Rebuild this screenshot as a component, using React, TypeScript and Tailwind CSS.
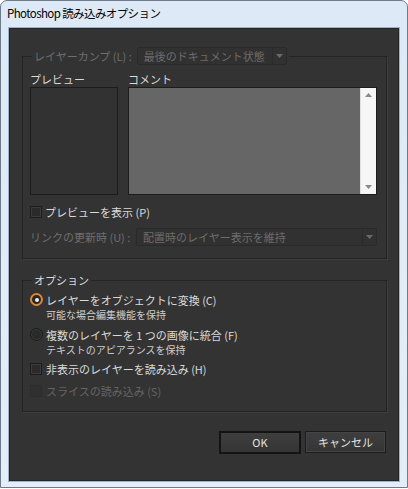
const font = "font-['Noto_Sans_CJK_JP','Noto_Sans',sans-serif]";

function Checkbox({ disabled }: { disabled?: boolean }) {
  return (
    <span
      className={`inline-block w-[12px] h-[12px] shrink-0 border ${
        disabled ? "border-[#2c2c2c] bg-[#303030]" : "border-[#1c1c1c] bg-[#2a2a2a] shadow-[inset_0_0_0_1px_#3c3c3c]"
      }`}
    />
  );
}

function Radio({ checked }: { checked?: boolean }) {
  return checked ? (
    <span className="flex items-center justify-center w-[13px] h-[13px] shrink-0 rounded-full border-2 border-[#e0862f] bg-[#262626]">
      <span className="w-[4px] h-[4px] rounded-full bg-[#f0f0f0]" />
    </span>
  ) : (
    <span className="w-[13px] h-[13px] shrink-0 rounded-full border border-[#1c1c1c] bg-[#2a2a2a] shadow-[inset_0_0_0_1px_#3a3a3a]" />
  );
}

function Select({ label, width }: { label: string; width: string }) {
  return (
    <div className={`flex items-stretch h-[18px] ${width} border border-[#2a2a2a] bg-[#313131] rounded-[2px]`}>
      <span className="flex-1 pl-[6px] text-[11px] leading-[16px] text-[#6c6c6c] truncate">{label}</span>
      <span className="flex items-center justify-center w-[14px] border-l border-[#2a2a2a]">
        <svg width="7" height="4" viewBox="0 0 7 4">
          <path d="M0 0h7L3.5 4z" fill="#6a6a6a" />
        </svg>
      </span>
    </div>
  );
}

export default function App() {
  return (
    <div className={`w-[408px] h-[489px] bg-white ${font}`}>
      <div className="w-[408px] h-[488px] rounded-t-[7px] border border-[#6f7b88] bg-gradient-to-b from-[#dde9f6] to-[#e4eef8] flex flex-col">
        {/* title bar */}
        <div className="h-[26px] pl-[6px] flex items-center text-[11.5px] text-black tracking-[-0.6px]">
          Photoshop 読み込みオプション
        </div>

        {/* client area */}
        <div className="mx-[7px] h-[455px] border border-[#9fb3c8] bg-[#333333] flex flex-col">
          <div className="flex-1 border border-[#262626] flex flex-col">
            {/* group 1 */}
            <fieldset className="mt-[18px] ml-[12px] mr-[11px] border border-[#242424] shadow-[1px_1px_0_#3d3d3d] px-[7px] pb-[12px]">
              <legend className="ml-[2px] px-[2px] flex items-center gap-[5px]">
                <span className="text-[11px] leading-[16px] text-[#6e6e6e]">レイヤーカンプ (L) :</span>
                <Select label="最後のドキュメント状態" width="w-[150px]" />
              </legend>

              <div className="flex gap-[10px] mt-[7px]">
                <div className="flex flex-col">
                  <span className="text-[11px] leading-[15px] text-[#dadada]">プレビュー</span>
                  <div className="w-[88px] h-[108px] border border-[#1c1c1c] bg-[#323232]" />
                </div>
                <div className="flex flex-col">
                  <span className="text-[11px] leading-[15px] text-[#dadada]">コメント</span>
                  <div className="w-[249px] h-[108px] border border-[#1c1c1c] bg-[#666666] flex justify-end">
                    <div className="w-[16px] h-full bg-[#f6f6f6] border-l border-[#e0e0e0] flex flex-col justify-between items-center py-[5px]">
                      <svg width="7" height="4" viewBox="0 0 7 4">
                        <path d="M3.5 0L7 4H0z" fill="#8a8a8a" />
                      </svg>
                      <svg width="7" height="4" viewBox="0 0 7 4">
                        <path d="M0 0h7L3.5 4z" fill="#8a8a8a" />
                      </svg>
                    </div>
                  </div>
                </div>
              </div>

              <div className="flex items-center gap-[3px] mt-[10px] h-[14px]">
                <Checkbox />
                <span className="text-[11px] leading-[14px] text-[#dadada]">プレビューを表示 (P)</span>
              </div>

              <div className="flex items-center mt-[9px]">
                <span className="w-[106px] text-[11px] leading-[16px] text-[#6e6e6e]">リンクの更新時 (U) :</span>
                <Select label="配置時のレイヤー表示を維持" width="w-[241px]" />
              </div>
            </fieldset>

            {/* group 2 */}
            <fieldset className="mt-[13px] ml-[12px] mr-[11px] border border-[#242424] shadow-[1px_1px_0_#3d3d3d] px-[7px] pb-[13px]">
              <legend className="ml-[2px] px-[2px] text-[11px] leading-[16px] text-[#dadada]">オプション</legend>

              <div className="flex flex-col mt-[5px]">
                <div className="flex items-start gap-[3px]">
                  <Radio checked />
                  <div className="flex flex-col">
                    <span className="text-[11px] leading-[14px] text-[#dadada]">レイヤーをオブジェクトに変換 (C)</span>
                    <span className="mt-[1px] text-[10px] leading-[14px] text-[#cdcdcd]">可能な場合編集機能を保持</span>
                  </div>
                </div>
                <div className="flex items-start gap-[3px] mt-[6px]">
                  <Radio />
                  <div className="flex flex-col">
                    <span className="text-[11px] leading-[14px] text-[#dadada]">複数のレイヤーを 1 つの画像に統合 (F)</span>
                    <span className="mt-[1px] text-[10px] leading-[14px] text-[#cdcdcd]">テキストのアピアランスを保持</span>
                  </div>
                </div>
                <div className="flex items-center gap-[4px] mt-[5px] h-[14px]">
                  <Checkbox />
                  <span className="text-[11px] leading-[14px] text-[#dadada]">非表示のレイヤーを読み込み (H)</span>
                </div>
                <div className="flex items-center gap-[4px] mt-[8px] h-[14px]">
                  <Checkbox disabled />
                  <span className="text-[11px] leading-[14px] text-[#646464]">スライスの読み込み (S)</span>
                </div>
              </div>
            </fieldset>

            {/* buttons */}
            <div className="flex justify-end gap-[4px] mt-[19px] mr-[12px]">
              <button className="w-[82px] h-[23px] border-2 border-[#141414] bg-gradient-to-b from-[#3e3e3e] to-[#353535] text-[11px] text-[#e4e4e4]">
                OK
              </button>
              <button className="w-[81px] h-[22px] border border-[#1c1c1c] bg-gradient-to-b from-[#3e3e3e] to-[#353535] shadow-[inset_0_0_0_1px_#444] text-[11px] text-[#e4e4e4]">
                キャンセル
              </button>
            </div>
          </div>
        </div>
      </div>
    </div>
  );
}
